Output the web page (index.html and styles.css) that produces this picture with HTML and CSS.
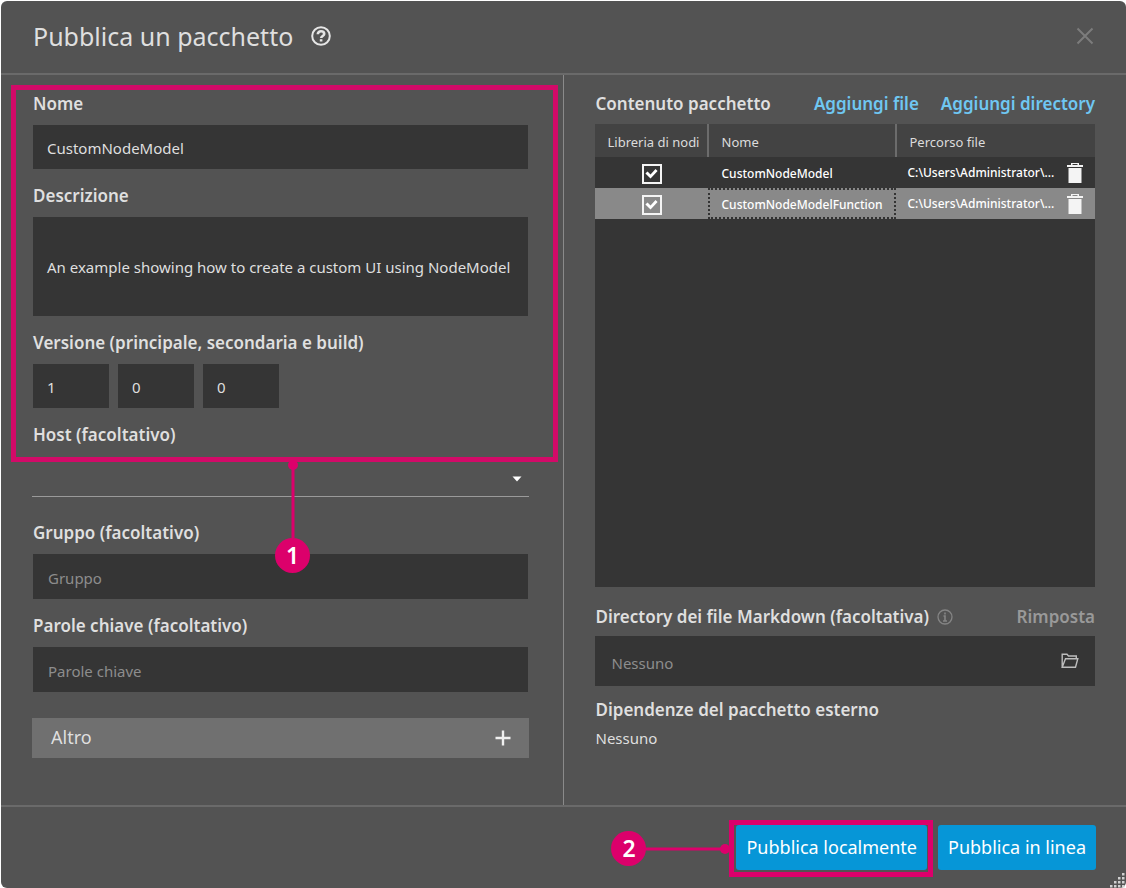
FILE: index.html
```html
<!DOCTYPE html>
<html lang="it">
<head>
<meta charset="utf-8">
<title>Pubblica un pacchetto</title>
<link rel="stylesheet" href="styles.css">
</head>
<body>
<main class="dialog">
  <header class="header">
    <h1 class="title">Pubblica un pacchetto</h1>
    <button class="icon-button" type="button" aria-label="Guida">
      <svg width="20" height="20" viewBox="0 0 20 20" fill="none" stroke="#e6e6e6" stroke-width="2"><circle cx="10" cy="10" r="8.8"/><path d="M6.800 8.200C6.800 6.200 8.300 5.300 10 5.300s3.200 1 3.200 2.600c0 2-3 2.100-3 4.100" stroke-width="2.600"/><path d="M8.800 13.200h2.600v2.300H8.800z" fill="#e6e6e6" stroke="none"/></svg>
    </button>
    <button class="icon-button close" type="button" aria-label="Chiudi">
      <svg width="18" height="18" viewBox="0 0 18 18" stroke="#7c7c7c" stroke-width="2"><path d="M1.500 1.500l15 15M16.500 1.500l-15 15"/></svg>
    </button>
  </header>

  <div class="body">
    <form class="column details">
      <div class="highlighted">
        <div class="field">
          <label class="label" for="name">Nome</label>
          <input class="input" id="name" type="text" value="CustomNodeModel">
        </div>
        <div class="field">
          <label class="label" for="description">Descrizione</label>
          <textarea class="input description" id="description">An example showing how to create a custom UI using NodeModel</textarea>
        </div>
        <div class="field">
          <label class="label" for="major">Versione (principale, secondaria e build)</label>
          <div class="versions">
            <input class="input version" id="major" type="text" value="1">
            <input class="input version" type="text" value="0" aria-label="Versione secondaria">
            <input class="input version" type="text" value="0" aria-label="Build">
          </div>
        </div>
        <label class="label" for="host">Host (facoltativo)</label>
        <div class="callout callout-one">
          <svg width="12" height="78" viewBox="0 0 12 78" fill="#dc006b"><circle cx="6" cy="5" r="5"/><path d="M4.500 5h3v73h-3z"/></svg>
          <span class="badge">1</span>
        </div>
      </div>
      <div class="select-wrap">
        <select class="select" id="host"><option></option></select>
        <svg class="arrow" width="10" height="6" viewBox="0 0 10 6"><path d="M0.500 0.500h9L5 5.500z" fill="#fff"/></svg>
      </div>
      <div class="field optional">
        <label class="label" for="group">Gruppo (facoltativo)</label>
        <input class="input" id="group" type="text" placeholder="Gruppo">
      </div>
      <div class="field optional">
        <label class="label" for="keywords">Parole chiave (facoltativo)</label>
        <input class="input" id="keywords" type="text" placeholder="Parole chiave">
      </div>
      <button class="more" type="button"><span class="more-text">Altro</span>
        <svg width="16" height="16" viewBox="0 0 16 16" stroke="#f0f0f0" stroke-width="2.400"><path d="M8 0.500v15M0.500 8h15"/></svg>
      </button>
    </form>

    <section class="column contents">
      <div class="toolbar">
        <h2 class="label">Contenuto pacchetto</h2>
        <a class="link" href="#file">Aggiungi file</a>
        <a class="link" href="#directory">Aggiungi directory</a>
      </div>
      <div class="table-box">
        <table class="table">
          <thead>
            <tr><th class="col-library">Libreria di nodi</th><th class="col-name">Nome</th><th>Percorso file</th></tr>
          </thead>
          <tbody>
            <tr>
              <td class="cell-check"><input class="check" type="checkbox" checked aria-label="CustomNodeModel"></td>
              <td class="cell-name">CustomNodeModel</td>
              <td><div class="path"><span>C:\Users\Administrator\...</span><button class="icon-button" type="button" aria-label="Elimina"><svg width="16" height="20" viewBox="0 0 16 20" fill="#f4f4f4"><path d="M4 0h8v2h4v2H0V2h4zM5.500 1v1h5V1zM1.500 5h13v15h-13z" fill-rule="evenodd"/></svg></button></div></td>
            </tr>
            <tr class="selected">
              <td class="cell-check"><input class="check" type="checkbox" checked aria-label="CustomNodeModelFunction"></td>
              <td class="cell-name focused">CustomNodeModelFunction</td>
              <td><div class="path"><span>C:\Users\Administrator\...</span><button class="icon-button" type="button" aria-label="Elimina"><svg width="16" height="20" viewBox="0 0 16 20" fill="#f4f4f4"><path d="M4 0h8v2h4v2H0V2h4zM5.500 1v1h5V1zM1.500 5h13v15h-13z" fill-rule="evenodd"/></svg></button></div></td>
            </tr>
          </tbody>
        </table>
      </div>
      <div class="markdown-head">
        <label class="label" for="markdown">Directory dei file Markdown (facoltativa)</label>
        <svg width="16" height="16" viewBox="0 0 16 16" fill="none" stroke="#858585" stroke-width="1.300"><circle cx="8" cy="8" r="7"/><path d="M8 3.500v2M6.500 7H8v5M6 12h4" stroke-width="1.600"/></svg>
        <button class="reset" type="button" disabled>Rimposta</button>
      </div>
      <div class="directory">
        <input class="directory-input" id="markdown" type="text" placeholder="Nessuno">
        <button class="icon-button" type="button" aria-label="Sfoglia">
          <svg width="18" height="16" viewBox="0 0 18 16" fill="none" stroke="#bdbdbd" stroke-width="1.400"><path d="M1.200 14.200V1.200H6L7.500 3h7.800v2.500M1.200 14.200L4.500 5.700h12.300l-2.300 8.500z"/></svg>
        </button>
      </div>
      <h2 class="label">Dipendenze del pacchetto esterno</h2>
      <p class="none">Nessuno</p>
    </section>
  </div>

  <footer class="footer">
    <div class="publish-local">
      <div class="callout callout-two">
        <span class="badge">2</span>
        <svg width="90" height="12" viewBox="0 0 90 12" fill="#dc006b"><path d="M0 4.500h85v3H0z"/><circle cx="85" cy="6" r="5"/></svg>
      </div>
      <button class="primary" type="button">Pubblica localmente</button>
    </div>
    <button class="primary" type="button">Pubblica in linea</button>
    <svg class="grip" width="15" height="15" viewBox="0 0 15 15" fill="#d0d0d0"><path d="M12 0h2.500v2.500h-2.500zM8 4h2.500v2.500H8zM12 4h2.500v2.500h-2.500zM4 8h2.500v2.500H4zM8 8h2.500v2.500H8zM12 8h2.500v2.500h-2.500zM0 12h2.500v2.500H0zM4 12h2.500v2.500H4zM8 12h2.500v2.500H8zM12 12h2.500v2.500h-2.500z"/></svg>
  </footer>
</main>
</body>
</html>
```
FILE: styles.css
```css
* { box-sizing: border-box; }

body {
  margin: 0;
  background: #fff;
  color: #dfdfdf;
  font-family: "Noto Sans", sans-serif;
  font-size: 15px;
}

button, input, textarea, select { font: inherit; color: inherit; }

.dialog {
  display: flex;
  flex-direction: column;
  min-height: calc(100vh - 1px);
  margin: 1px 0 0 1px;
  background: #535353;
  border-radius: 6px;
}

.header {
  display: flex;
  align-items: center;
  gap: 18px;
  height: 74px;
  padding: 0 32px 2px;
  border-bottom: 2px solid #6a6a6a;
}

.title { margin: 0; font-size: 25px; font-weight: 400; line-height: 32px; }

.icon-button {
  display: flex;
  padding: 0;
  border: 0;
  background: none;
  cursor: pointer;
}

.close { margin-left: auto; }

.body {
  flex: 1;
  display: grid;
  grid-template-columns: minmax(0, 1fr) minmax(0, 1fr);
}

.column { display: flex; flex-direction: column; padding: 17px 31px 55px; }
.details { padding-right: 34px; padding-bottom: 40px; border-right: 1px solid #8a8a8a; }

.label {
  display: block;
  margin: 0;
  padding-left: 1px;
  font-size: 17px;
  font-weight: 600;
  line-height: 24px;
}

.highlighted { position: relative; display: flex; flex-direction: column; gap: 15px; }

.highlighted::after {
  content: "";
  position: absolute;
  inset: -7px -29px -15px -21px;
  border: 5px solid #d20a68;
  pointer-events: none;
}

.field { display: flex; flex-direction: column; gap: 9px; }

.input {
  height: 44px;
  margin: 0 1px;
  padding: 2px 14px 0;
  border: 0;
  background: #353535;
}

.input::placeholder, .directory-input::placeholder { color: #8d8d8d; opacity: 1; }

.description {
  height: 99px;
  padding: 39px 14px 0;
  line-height: 22px;
  resize: none;
  overflow: hidden;
}

.versions { display: flex; gap: 9px; padding-left: 1px; }
.version { width: 76px; margin: 0; }

.badge {
  display: flex;
  align-items: center;
  justify-content: center;
  width: 35px;
  height: 35px;
  border-radius: 50%;
  background: #dc006b;
  color: #fff;
  font-size: 23px;
  font-weight: 600;
  line-height: 1;
}

.callout { position: absolute; z-index: 1; display: flex; align-items: center; }
.callout-one { top: 368px; left: 243px; flex-direction: column; }

.select-wrap { position: relative; margin-bottom: 24px; }

.select {
  display: block;
  width: 100%;
  height: 50px;
  border: 0;
  border-bottom: 1px solid #9a9a9a;
  background: none;
  appearance: none;
}

.arrow { position: absolute; right: 7px; top: 29px; pointer-events: none; }

.optional { margin-bottom: 15px; }
.optional .input { height: 45px; padding: 2px 15px 0; }

.more {
  display: flex;
  align-items: center;
  justify-content: space-between;
  height: 40px;
  margin-top: 11px;
  padding: 0 18px 0 19px;
  border: 0;
  background: #707070;
  font-size: 18px;
  line-height: 24px;
}

.more-text { padding-bottom: 2px; }

.toolbar { display: flex; gap: 22px; }
.toolbar .label { margin-right: auto; }

.link {
  color: #6fc7f2;
  font-size: 17px;
  font-weight: 600;
  line-height: 24px;
  text-decoration: none;
}

.table-box { flex: 1; margin-top: 8px; background: #353535; }

.table {
  width: 100%;
  border-collapse: collapse;
  table-layout: fixed;
  color: #fff;
  font-size: 12px;
}

.table th {
  height: 33px;
  padding: 3px 13px 0;
  background: #434343;
  color: #dcdcdc;
  font-size: 13px;
  font-weight: 400;
  text-align: left;
  white-space: nowrap;
}

.table th + th { border-left: 2px solid #6c6c6c; }
.col-library { width: 113px; }
.col-name { width: 188px; }

.table td { height: 31px; padding: 0 12px; font-weight: 500; white-space: nowrap; }
.table .cell-check { padding: 0 0 0 1px; }
.table .cell-name { padding: 1px 0 0 14px; }
.selected { background: #898989; }
.focused { outline: 2px dotted #333; outline-offset: -2px; }

.check {
  appearance: none;
  display: block;
  width: 20px;
  height: 20px;
  margin: 2px auto 0;
  border: 2px solid #f4f4f4;
  background: none;
}

.check:checked::before {
  content: "";
  display: block;
  width: 16px;
  height: 16px;
  background: #fff;
  clip-path: polygon(12% 50%, 25% 37%, 44% 56%, 75% 22%, 88% 34%, 44% 81%);
}

.path { display: flex; align-items: center; justify-content: space-between; }

.markdown-head { display: flex; align-items: center; gap: 8px; margin-top: 18px; }

.reset {
  margin-left: auto;
  padding: 0;
  border: 0;
  background: none;
  color: #999;
  font-size: 17px;
  font-weight: 600;
  line-height: 24px;
}

.directory {
  display: flex;
  align-items: center;
  height: 50px;
  margin: 7px 0 12px;
  padding: 0 16px;
  background: #353535;
}

.directory-input { flex: 1; min-width: 0; padding: 4px 0 0 1px; border: 0; background: none; }

.none { margin: 4px 0 0; padding-left: 1px; line-height: 24px; }

.footer {
  position: relative;
  display: flex;
  justify-content: flex-end;
  gap: 11px;
  padding: 18px 30px;
  border-top: 2px solid #6a6a6a;
}

.publish-local { position: relative; }

.publish-local::after {
  content: "";
  position: absolute;
  inset: -5px -6px -7px -7px;
  border: 5px solid #dc006b;
  pointer-events: none;
}

.callout-two { right: calc(100% + 6px); top: 6px; }
.callout-two svg { margin-left: -6px; }

.primary {
  height: 45px;
  padding: 0 10px 2px;
  border: 0;
  border-radius: 3px;
  background: #0696d7;
  color: #fff;
  font-size: 18px;
  white-space: nowrap;
}

.grip { position: absolute; right: 1px; bottom: 0; }
```
